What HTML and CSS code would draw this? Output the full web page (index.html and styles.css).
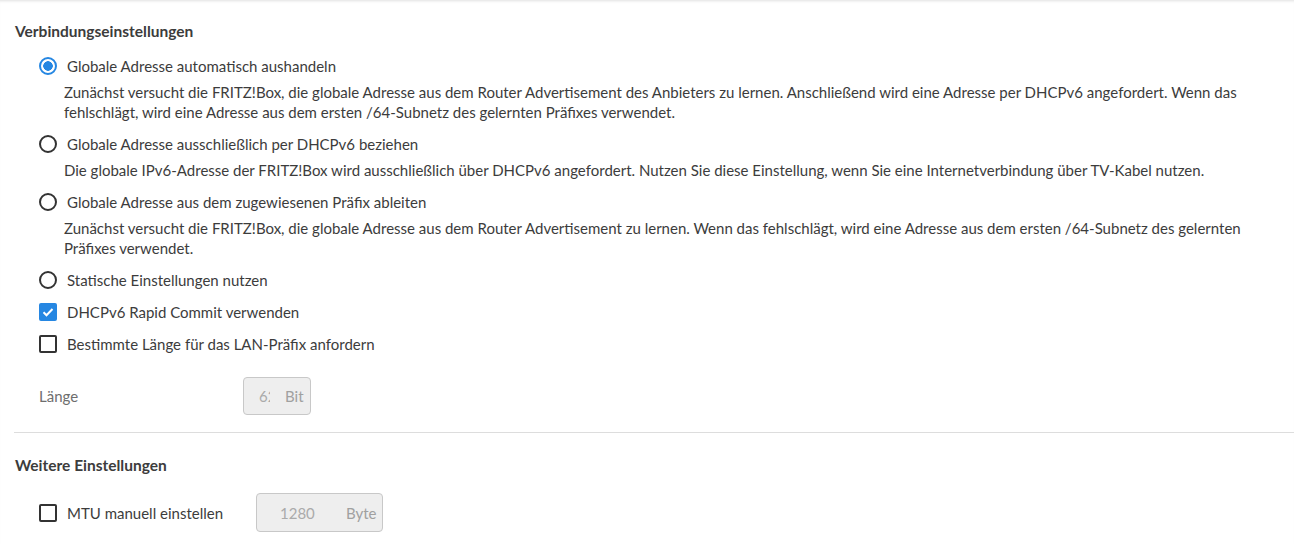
FILE: index.html
```html
<!DOCTYPE html>
<html lang="de">
<head>
    <meta charset="UTF-8">
    <title>Internetzugang IPv6</title>

    <link rel="stylesheet" href="styles.css">
</head>
<body>

<div id="page">
    <div class="section">
        <h2>Verbindungseinstellungen</h2>

        <div class="options">
            <div class="option">
                <label class="choice">
                    <input type="radio" name="ipv6mode" checked>
                    <span>Globale Adresse automatisch aushandeln</span>
                </label>
                <p class="hint">
                    Zunächst versucht die FRITZ!Box, die globale Adresse aus dem Router Advertisement des Anbieters zu lernen. Anschließend wird eine Adresse per DHCPv6 angefordert. Wenn das fehlschlägt, wird eine Adresse aus dem ersten /64-Subnetz des gelernten Präfixes verwendet.
                </p>
            </div>

            <div class="option">
                <label class="choice">
                    <input type="radio" name="ipv6mode">
                    <span>Globale Adresse ausschließlich per DHCPv6 beziehen</span>
                </label>
                <p class="hint">
                    Die globale IPv6-Adresse der FRITZ!Box wird ausschließlich über DHCPv6 angefordert. Nutzen Sie diese Einstellung, wenn Sie eine Internetverbindung über TV-Kabel nutzen.
                </p>
            </div>

            <div class="option">
                <label class="choice">
                    <input type="radio" name="ipv6mode">
                    <span>Globale Adresse aus dem zugewiesenen Präfix ableiten</span>
                </label>
                <p class="hint">
                    Zunächst versucht die FRITZ!Box, die globale Adresse aus dem Router Advertisement zu lernen. Wenn das fehlschlägt, wird eine Adresse aus dem ersten /64-Subnetz des gelernten Präfixes verwendet.
                </p>
            </div>

            <div class="option">
                <label class="choice">
                    <input type="radio" name="ipv6mode">
                    <span>Statische Einstellungen nutzen</span>
                </label>
            </div>

            <div class="option">
                <label class="choice">
                    <input type="checkbox" checked>
                    <span>DHCPv6 Rapid Commit verwenden</span>
                </label>
            </div>

            <div class="option">
                <label class="choice">
                    <input type="checkbox">
                    <span>Bestimmte Länge für das LAN-Präfix anfordern</span>
                </label>
            </div>

            <div class="field-row">
                <span class="field-label">Länge</span>
                <div class="unit-field">
                    <input type="text" class="prefix-len" value="62" disabled>
                    <span class="unit">Bit</span>
                </div>
            </div>
        </div>
    </div>

    <div class="section">
        <h2>Weitere Einstellungen</h2>

        <div class="options">
            <div class="field-row mtu-row">
                <label class="choice">
                    <input type="checkbox">
                    <span>MTU manuell einstellen</span>
                </label>
                <div class="unit-field wide">
                    <input type="text" class="mtu" value="1280" disabled>
                    <span class="unit">Byte</span>
                </div>
            </div>
        </div>
    </div>
</div>

</body>
</html>
```

FILE: styles.css
```css
body {
    margin: 0;
    background-color: rgb(255, 255, 255);
    font-family: Lato, "Noto Sans", sans-serif;
    font-size: 15px;
    line-height: 20px;
    color: rgb(60, 60, 60);
}

#page {
    padding-top: 21px;
    box-shadow: inset 0 3px 3px -2px rgba(0, 0, 0, 0.12);
}

.section {
    margin-left: 14px;
}

.section + .section {
    border-top: 1px solid rgb(221, 221, 221);
    padding-top: 22px;
}

h2 {
    font-size: 15.5px;
    line-height: 20px;
    font-weight: 700;
    margin: 0 0 15px 1px;
}

.section + .section h2 {
    margin-bottom: 18px;
}

.options {
    padding-left: 25px;
    padding-right: 34px;
}

.option {
    margin-bottom: 12px;
}

.choice {
    display: flex;
    align-items: center;
    gap: 10px;
    cursor: pointer;
}

.choice input {
    appearance: none;
    margin: 0;
    flex: none;
    width: 18px;
    height: 18px;
    border: 2px solid rgb(51, 51, 51);
    background-color: rgb(255, 255, 255);
}

.choice input[type="radio"] {
    border-radius: 50%;
}

.choice input[type="radio"]:checked {
    border-color: rgb(38, 135, 226);
    background: radial-gradient(circle, rgb(38, 135, 226) 0 4.5px, rgb(255, 255, 255) 5px);
}

.choice input[type="checkbox"] {
    border-radius: 2px;
}

.choice input[type="checkbox"]:checked {
    border-color: rgb(38, 135, 226);
    background: rgb(38, 135, 226) url("data:image/svg+xml,%3Csvg xmlns='http://www.w3.org/2000/svg' viewBox='0 0 14 14'%3E%3Cpath d='M2.5 7.2l3 3 6-6.2' fill='none' stroke='white' stroke-width='2'/%3E%3C/svg%3E") center / 14px no-repeat;
}

.hint {
    margin: 6px 0 0 25px;
}

.field-row {
    display: flex;
    align-items: center;
    padding-top: 11px;
    padding-bottom: 17px;
}

.field-label {
    width: 204px;
    color: rgb(110, 110, 110);
}

.unit-field {
    display: flex;
    align-items: center;
    height: 36px;
    width: 66px;
    background-color: rgb(238, 238, 238);
    border: 1px solid rgb(200, 200, 200);
    border-radius: 4px;
    color: rgb(160, 160, 160);
}

.unit-field input {
    font: inherit;
    color: rgb(170, 170, 170);
    background: transparent;
    border: 0;
    padding: 0 0 0 15px;
    box-sizing: border-box;
    height: 100%;
    outline: none;
}

.prefix-len {
    width: 26px;
}

.mtu {
    width: 60px;
    padding-left: 23px !important;
}

.unit {
    margin-left: 15px;
}

.unit-field.wide {
    width: 125px;
    height: 37px;
}

.wide .unit {
    margin-left: 29px;
}

.mtu-row {
    padding-top: 0;
}

.mtu-row .choice {
    width: 217px;
}
```
